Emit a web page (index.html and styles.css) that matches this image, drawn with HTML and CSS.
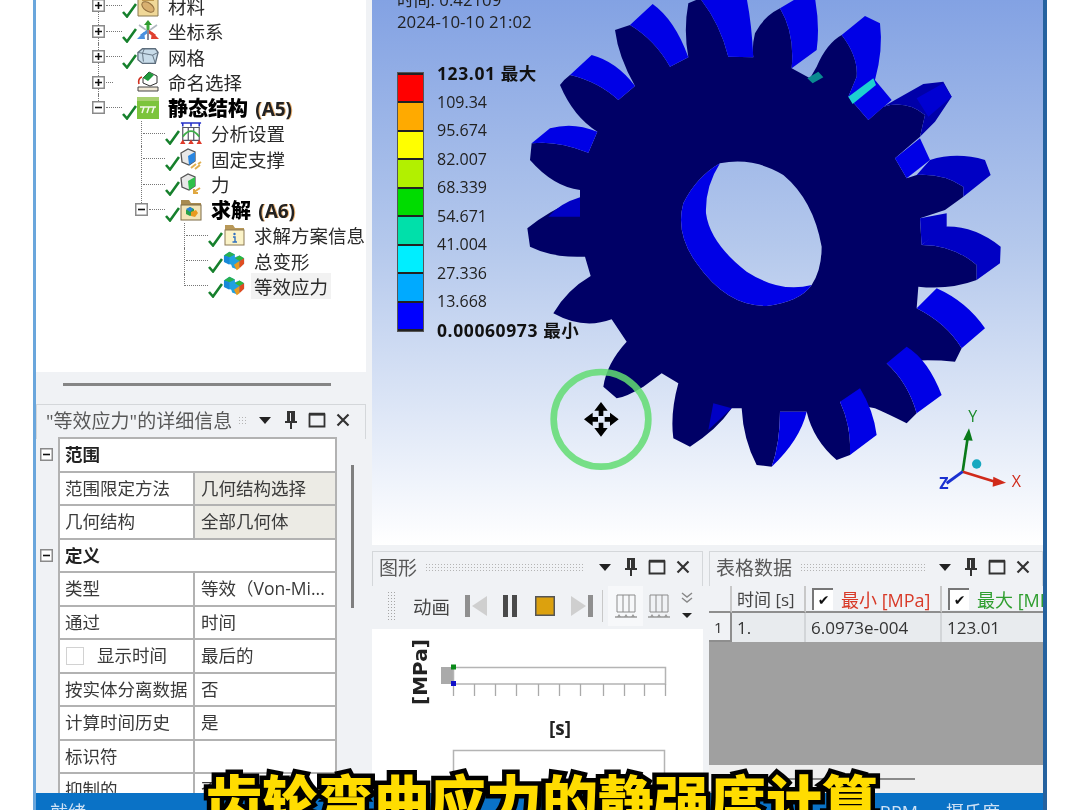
FILE: index.html
```html
<!DOCTYPE html>
<html lang="zh">
<head>
<meta charset="utf-8">
<title>静态结构 - 等效应力</title>
<link rel="stylesheet" href="styles.css">
</head>
<body>
<svg class="defs" aria-hidden="true">
  <symbol id="chk" viewBox="0 0 15 15"><path d="M1 9l4 4.5L14 1" fill="none" stroke="#16802c" stroke-width="2.6"/></symbol>
  <symbol id="plus" viewBox="0 0 13 13"><rect x=".75" y=".75" width="11.5" height="11.5" fill="#fff" stroke="#8a8a8a" stroke-width="1.5"/><path d="M3 6.5h7M6.5 3v7" stroke="#111" stroke-width="1.6"/></symbol>
  <symbol id="minus" viewBox="0 0 13 13"><rect x=".75" y=".75" width="11.5" height="11.5" fill="#fff" stroke="#8a8a8a" stroke-width="1.5"/><path d="M3 6.5h7" stroke="#111" stroke-width="1.6"/></symbol>
  <symbol id="mat" viewBox="0 0 22 22"><path d="M1 1h20v20H1z" fill="#f0d898" stroke="#8a7a50"/><path d="M5 0h12v6H5z" fill="#c09a50"/><ellipse cx="11" cy="12" rx="7" ry="4" transform="rotate(35 11 12)" fill="#d8b070" stroke="#927040"/></symbol>
  <symbol id="coord" viewBox="0 0 22 22"><path d="M11 11V3" stroke="#3aa83a" stroke-width="3"/><path d="M7 5l4-5 4 5z" fill="#2f9a2f"/><path d="M11 11l7 5" stroke="#e04030" stroke-width="3"/><path d="M15 12l7 7-8 0z" fill="#e04030"/><path d="M11 11l-7 5" stroke="#4a90e0" stroke-width="3"/><path d="M7 12l-7 7 8 0z" fill="#4a90e0"/><path d="M11 10v10" stroke="#889" stroke-width="2"/><path d="M2 5l7 5M20 5l-7 5" stroke="#b0b8c0" stroke-width="1.6"/></symbol>
  <symbol id="mesh" viewBox="0 0 24 22"><path d="M1 6l5-4h14l3 4-3 12H6L1 14z" fill="#c8dcea" stroke="#5d6d7c" stroke-width="1.4"/><path d="M1 6l16 3 6-3M17 9l3 9M8 2l-2 5M6 7l1 9" fill="none" stroke="#5d6d7c"/></symbol>
  <symbol id="named" viewBox="0 0 22 22"><path d="M6 7l6-6 8 4v7l-7 3-7-3z" fill="#fff" stroke="#333"/><path d="M6 7l6-6 5 3-6 6z" fill="#1f9a3c"/><path d="M1 16h20v4H1z" fill="#f3ead8" stroke="#444"/><path d="M2 13c-1-4 0-6 3-7" fill="none" stroke="#d03020" stroke-width="1.6"/></symbol>
  <symbol id="static" viewBox="0 0 22 22"><rect width="22" height="22" fill="#7cc43c"/><rect width="22" height="4" fill="#a8d070"/><path d="M3 10h16M7 10l-2 6M12 10l-2 6M17 10l-2 6" stroke="#f2f8e8" stroke-width="1.5" fill="none"/></symbol>
  <symbol id="analysis" viewBox="0 0 24 24"><path d="M3 6h18v14H3zM9 6v14M15 6v14" fill="none" stroke="#556" stroke-width="1.3"/><path d="M3 16Q12 4 21 16" fill="none" stroke="#3fae4a" stroke-width="2"/><path d="M1 1h22M3 1v4M12 1v4M21 1v4" stroke="#2630c8" stroke-width="1.7"/><path d="M0 24l3-5 3 5zM9 24l3-5 3 5zM18 24l3-5 3 5z" fill="#e03a2a"/></symbol>
  <symbol id="fixed" viewBox="0 0 22 22"><path d="M1 5l7-4 7 3v9l-6 4-7-3z" fill="#e8e8e8" stroke="#555" stroke-width="1.3"/><path d="M8 8l7-4v9l-6 4z" fill="#2a86e0"/><path d="M11 20l5-4M15 21l5-4M18 16l3-2" stroke="#e0b050" stroke-width="2"/></symbol>
  <symbol id="force" viewBox="0 0 22 22"><path d="M1 5l7-4 7 3v9l-6 4-7-3z" fill="#e8e8e8" stroke="#555" stroke-width="1.3"/><path d="M8 8l7-4v9l-6 4z" fill="#2fc04a"/><path d="M20 15l-6 4M14 16v4h4" fill="none" stroke="#e0a840" stroke-width="2"/></symbol>
  <symbol id="solve" viewBox="0 0 22 22"><path d="M1 1h8l2 3h10v17H1z" fill="#a88a50"/><rect x="1" y="6" width="20" height="15" fill="#f3e4b8" stroke="#7d6a44"/><path d="M6 11l4-3 4 2v5l-4 2-4-2z" fill="#28a048"/><path d="M6 10l4-2 3 2-3 3z" fill="#2a80d8"/><path d="M11 13l5-2 2 3-3 4-4-1z" fill="#e89a20"/></symbol>
  <symbol id="info" viewBox="0 0 22 22"><path d="M2 1h8l2 3h9v17H2z" fill="#b89858"/><rect x="2" y="6" width="19" height="15" fill="#fbf3c8" stroke="#8d7a54"/><circle cx="11.500" cy="10" r="1.200" fill="#3070c0"/><path d="M10 13h2v5M9.500 18h4.500" stroke="#3070c0" stroke-width="1.400" fill="none"/></symbol>
  <symbol id="result" viewBox="0 0 24 22"><path d="M1 5l6-4 6 3v3l5-2 5 3v6l-8 6-5-2-1-3-7-3z" fill="#20a0e0"/><path d="M1 5l6-4 6 3-6 3z" fill="#28b050"/><path d="M7 7v8l-6-3V5z" fill="#1888d8"/><path d="M13 8l5-3 5 3-5 3z" fill="#30b838"/><path d="M12 15l6-4v8l-3 2z" fill="#e89a20"/><path d="M18 11l5-3v6l-5 5z" fill="#e04c20"/></symbol>
  <symbol id="pin" viewBox="0 0 14 20"><path d="M3 1h8v10h2v2H8v6H6v-6H1v-2h2zM6 3v8h1V3z" fill="#333"/></symbol>
  <symbol id="box" viewBox="0 0 18 16"><path d="M1.500 2.500h15v12h-15z" fill="none" stroke="#333" stroke-width="1.800"/><path d="M1 2h16" stroke="#333" stroke-width="2.500"/></symbol>
  <symbol id="close" viewBox="0 0 14 14"><path d="M1.500 1.500l11 11M12.500 1.500l-11 11" stroke="#333" stroke-width="2.200"/></symbol>
  <symbol id="frame" viewBox="0 0 24 28"><path d="M3 3h18M3 20h18M3 3v17M9 3v17M15 3v17M21 3v17" stroke="#8c8c8c" fill="none"/><path d="M1 25h22" stroke="#9a9a9a" stroke-width="1.500"/><path d="M3 25l2-3 2 3zM10 25l2-3 2 3zM17 25l2-3 2 3z" fill="#9a9a9a"/></symbol>
</svg>

<div class="window">
  <div class="main">
    <aside class="left">
      <nav class="tree">
        <div class="row lv1"><span class="slot"><span class="toggle down"><svg class="t-ico"><use href="#plus"/></svg></span><i class="stub"></i></span><svg class="chk"><use href="#chk"/></svg><svg class="ico"><use href="#mat"/></svg><span class="label">材料</span></div>
        <div class="row lv1"><span class="slot"><span class="toggle up down"><svg class="t-ico"><use href="#plus"/></svg></span><i class="stub"></i></span><svg class="chk"><use href="#chk"/></svg><svg class="ico"><use href="#coord"/></svg><span class="label">坐标系</span></div>
        <div class="row lv1"><span class="slot"><span class="toggle up down"><svg class="t-ico"><use href="#plus"/></svg></span><i class="stub"></i></span><svg class="chk"><use href="#chk"/></svg><svg class="ico"><use href="#mesh"/></svg><span class="label">网格</span></div>
        <div class="row lv1"><span class="slot"><span class="toggle up down"><svg class="t-ico"><use href="#plus"/></svg></span><i class="stub short"></i></span><span class="chk"></span><svg class="ico"><use href="#named"/></svg><span class="label">命名选择</span></div>
        <div class="row lv1"><span class="slot"><span class="toggle up"><svg class="t-ico"><use href="#minus"/></svg></span><i class="stub"></i></span><svg class="chk"><use href="#chk"/></svg><svg class="ico"><use href="#static"/></svg><span class="label bold">静态结构 <b class="tag">(A5)</b></span></div>
        <div class="row lv2"><span class="slot"><span class="vline"><i class="stub"></i></span></span><svg class="chk"><use href="#chk"/></svg><svg class="ico"><use href="#analysis"/></svg><span class="label">分析设置</span></div>
        <div class="row lv2"><span class="slot"><span class="vline"><i class="stub"></i></span></span><svg class="chk"><use href="#chk"/></svg><svg class="ico"><use href="#fixed"/></svg><span class="label">固定支撑</span></div>
        <div class="row lv2"><span class="slot"><span class="vline"><i class="stub"></i></span></span><svg class="chk"><use href="#chk"/></svg><svg class="ico"><use href="#force"/></svg><span class="label">力</span></div>
        <div class="row lv2"><span class="slot"><span class="toggle up"><svg class="t-ico"><use href="#minus"/></svg></span><i class="stub"></i></span><svg class="chk"><use href="#chk"/></svg><svg class="ico"><use href="#solve"/></svg><span class="label bold">求解 <b class="tag">(A6)</b></span></div>
        <div class="row lv3"><span class="slot"><span class="vline"><i class="stub"></i></span></span><svg class="chk"><use href="#chk"/></svg><svg class="ico"><use href="#info"/></svg><span class="label">求解方案信息</span></div>
        <div class="row lv3"><span class="slot"><span class="vline"><i class="stub"></i></span></span><svg class="chk"><use href="#chk"/></svg><svg class="ico"><use href="#result"/></svg><span class="label">总变形</span></div>
        <div class="row lv3"><span class="slot"><span class="vline end"></span></span><svg class="chk"><use href="#chk"/></svg><svg class="ico"><use href="#result"/></svg><span class="label selected">等效应力</span></div>
      </nav>
      <div class="splitter"><span class="splitter-bar"></span></div>
      <section class="details">
        <header class="tab tab-details">
          <span class="tab-title">"等效应力"的详细信息</span>
          <span class="grip grip-short"></span>
          <span class="tab-btn"><i class="tri"></i></span>
          <span class="tab-btn"><svg class="pin"><use href="#pin"/></svg></span>
          <span class="tab-btn"><svg class="box"><use href="#box"/></svg></span>
          <span class="tab-btn"><svg class="close"><use href="#close"/></svg></span>
        </header>
        <div class="details-body">
          <table class="props">
            <colgroup><col class="col-exp"><col class="col-k"><col class="col-v"></colgroup>
            <tr><td class="exp"><svg class="t-ico"><use href="#minus"/></svg></td><th colspan="2">范围</th></tr>
            <tr><td class="exp"></td><td class="k">范围限定方法</td><td class="v ro">几何结构选择</td></tr>
            <tr><td class="exp"></td><td class="k">几何结构</td><td class="v ro">全部几何体</td></tr>
            <tr><td class="exp"><svg class="t-ico"><use href="#minus"/></svg></td><th colspan="2">定义</th></tr>
            <tr><td class="exp"></td><td class="k">类型</td><td class="v">等效（Von-Mi...</td></tr>
            <tr><td class="exp"></td><td class="k">通过</td><td class="v">时间</td></tr>
            <tr><td class="exp"></td><td class="k"><span class="cb"></span>显示时间</td><td class="v">最后的</td></tr>
            <tr><td class="exp"></td><td class="k">按实体分离数据</td><td class="v">否</td></tr>
            <tr><td class="exp"></td><td class="k">计算时间历史</td><td class="v">是</td></tr>
            <tr><td class="exp"></td><td class="k">标识符</td><td class="v"></td></tr>
            <tr><td class="exp"></td><td class="k">抑制的</td><td class="v">否</td></tr>
          </table>
          <span class="vscroll"></span>
        </div>
      </section>
    </aside>

    <div class="right">
      <section class="viewport">
        <svg class="scene" viewBox="0 0 670 545" aria-hidden="true">
          <g transform="translate(148 0) scale(.33333)">
            <path fill="#000066" fill-rule="evenodd" d="M120 255Q130 240 150 225Q235 245 295 300L345 258Q295 170 285 90L330 75Q405 120 450 200L505 172Q490 90 505 10L540 -5Q600 70 625 170L700 172Q695 140 705 100Q730 50 780 25Q825 100 815 205L870 235L890 200Q920 130 965 105Q1015 170 1010 230L985 290L1045 360L1090 320Q1160 300 1215 345L1200 410L1125 475L1160 535L1190 525Q1270 520 1330 560L1330 590L1275 630L1200 655L1205 735Q1300 735 1370 795L1370 840Q1290 870 1195 860L1190 925Q1280 970 1325 1045L1305 1085Q1200 1075 1100 1090Q1165 1150 1190 1240L1160 1270Q1100 1240 1065 1225L960 1205Q995 1280 990 1365L950 1380Q880 1320 860 1235L780 1235Q780 1330 755 1400L710 1395Q670 1320 665 1225L635 1225Q590 1290 510 1340L460 1315Q450 1240 475 1150L425 1120L370 1160Q320 1190 290 1195L250 1160Q260 1090 320 1025L275 958Q190 990 100 940Q140 870 212 828L195 770Q100 775 30 740L22 685Q90 630 180 595L180 570Q100 560 30 480L35 430Q110 420 205 458L232 395Q160 350 120 255Z M600 490Q530 530 490 610Q465 700 530 790Q620 920 740 918Q840 905 875 855Q905 810 905 740Q880 600 790 525Q700 470 600 490Z"/>
            <path fill="#0000e6" fill-rule="evenodd" d="M600 490Q530 530 490 610Q465 700 530 790Q620 920 740 918Q840 905 875 855Q905 810 905 740Q880 600 790 525Q700 470 600 490Z M600 490Q700 470 790 525Q880 600 905 740Q905 810 875 855Q780 880 680 815Q570 730 558 640Q555 560 600 490Z"/>
            <g fill="#0000e6">
              <path d="M150 225L215 165Q290 185 345 258L295 300Q235 245 150 225Z"/>
              <path d="M330 75L398 12Q465 60 505 172L450 200Q405 120 330 75Z"/>
              <path d="M540 -5L680 -5Q695 70 700 172L625 170Q600 70 540 -5Z"/>
              <path d="M780 25L830 -5L885 -5Q900 80 890 150L815 205Q825 100 780 25Z"/>
              <path d="M965 105L1035 48L1080 70Q1090 150 1065 240L1115 300L1045 360L985 290L1010 230Q1015 170 965 105Z"/>
              <path d="M1125 475L1200 415L1230 480L1160 535Z"/>
              <path d="M1190 925L1250 865Q1340 905 1395 985L1325 1045Q1280 970 1190 925Z"/>
              <path d="M1100 1090L1160 1040Q1225 1080 1265 1185L1190 1240Q1165 1150 1100 1090Z"/>
              <path d="M960 1205L1020 1165Q1060 1230 1070 1305L990 1365Q995 1280 960 1205Z"/>
              <path d="M780 1235L860 1235Q840 1320 755 1400Q780 1330 780 1235Z"/>
              <path d="M35 430L90 385Q160 365 232 395L205 458Q110 420 35 430Z"/>
            </g>
            <path fill="#0000a8" d="M1125 300L1210 252L1270 245L1295 290L1245 365L1200 410L1215 345Q1160 300 1090 320Z"/>
            <path fill="#0000d2" d="M1190 295L1270 250L1295 290L1225 350Z"/>
            <g fill="#0000c4">
              <path d="M1190 525L1230 480Q1310 455 1395 480L1412 525L1330 590Q1330 560 1330 560Q1270 520 1190 525Z"/>
              <path d="M1200 655L1280 640L1280 680L1205 735Z"/>
              <path d="M1205 735L1270 680Q1360 675 1442 740L1440 790L1370 840L1370 795Q1300 735 1205 735Z"/>
              <path d="M580 1210L635 1225L565 1290Z"/>
              <path d="M180 592Q120 610 85 650L180 650Z"/>
            </g>
            <path fill="#1dd0d0" d="M985 290L1060 235L1068 255L998 312Z"/>
            <path fill="#0a8a90" d="M862 235L895 215L910 232L878 250Z"/>
            <circle cx="243" cy="1258" r="142" fill="none" stroke="#62dc72" stroke-width="20" opacity=".85"/>
            <path fill="#000" d="M243 1206l20 26h-13v16h-14v-16h-13zM243 1310l20-26h-13v-16h-14v16h-13zM192 1258l26-20v13h16v14h-16v13zM296 1258l-26-20v13h-16v14h16v13z"/>
            <path d="M1328 1415L1345 1300" stroke="#0a7a1a" stroke-width="8"/>
            <path d="M1330 1320L1347 1285L1358 1322Z" fill="#0a7a1a"/>
            <path d="M1328 1415L1435 1448" stroke="#d02a1a" stroke-width="8"/>
            <path d="M1420 1430L1458 1448L1418 1460Z" fill="#d02a1a"/>
            <path d="M1328 1415L1280 1450" stroke="#1a30d0" stroke-width="9"/>
            <circle cx="1370" cy="1392" r="14" fill="#18a8c0"/>
            <text class="axis axis-y" x="1345" y="1265">Y</text>
            <text class="axis axis-x" x="1475" y="1460">X</text>
            <text class="axis axis-z" x="1258" y="1466">Z</text>
          </g>
        </svg>
        <div class="stamp">
          <span>时间: 0.42109</span>
          <span>2024-10-10 21:02</span>
        </div>
        <div class="legend">
          <div class="swatches">
            <i class="sw sw1"></i><i class="sw sw2"></i><i class="sw sw3"></i><i class="sw sw4"></i><i class="sw sw5"></i><i class="sw sw6"></i><i class="sw sw7"></i><i class="sw sw8"></i><i class="sw sw9"></i>
          </div>
          <div class="ticks">
            <b>123.01 最大</b><span>109.34</span><span>95.674</span><span>82.007</span><span>68.339</span><span>54.671</span><span>41.004</span><span>27.336</span><span>13.668</span><b>0.00060973 最小</b>
          </div>
        </div>
      </section>

      <div class="bottom">
        <section class="panel graph">
          <header class="tab">
            <span class="tab-title">图形</span>
            <span class="grip"></span>
            <span class="tab-btn"><i class="tri"></i></span>
            <span class="tab-btn"><svg class="pin"><use href="#pin"/></svg></span>
            <span class="tab-btn"><svg class="box"><use href="#box"/></svg></span>
            <span class="tab-btn"><svg class="close"><use href="#close"/></svg></span>
          </header>
          <div class="toolbar">
            <span class="tb-grip"></span>
            <span class="tb-label">动画</span>
            <svg class="tb-ico first" viewBox="0 0 22 22"><path d="M0 0h5v22H0z" fill="#8f8f8f"/><path d="M22 1v20L7 11z" fill="#cfcfcf"/></svg>
            <svg class="tb-ico pause" viewBox="0 0 14 22"><path d="M0 0h5v22H0zM9 0h5v22H9z" fill="#4a4a4a"/></svg>
            <svg class="tb-ico stop" viewBox="0 0 20 20"><rect x=".75" y=".75" width="18.5" height="18.500" fill="#dca10e" stroke="#555" stroke-width="1.500"/></svg>
            <svg class="tb-ico last" viewBox="0 0 22 22"><path d="M17 0h5v22h-5z" fill="#8f8f8f"/><path d="M0 1v20l15-10z" fill="#cfcfcf"/></svg>
            <span class="tb-sep"></span>
            <span class="tb-btn hi"><svg class="tb-frame"><use href="#frame"/></svg></span>
            <span class="tb-btn"><svg class="tb-frame"><use href="#frame"/></svg></span>
            <svg class="tb-more" viewBox="0 0 12 28"><path d="M1 1l5 4 5-4M1 6l5 4 5-4" fill="none" stroke="#888" stroke-width="1.400"/><path d="M1 21h10l-5 5z" fill="#222"/></svg>
          </div>
          <svg class="chart" viewBox="0 0 331 164" aria-hidden="true">
            <text class="chart-label mpa" transform="translate(55 76) rotate(-90)" x="0" y="0">[MPa]</text>
            <rect x="69" y="38" width="12" height="17" fill="#aaa"/>
            <path d="M81.500 38.500H293.500V55H81.500Z" fill="#fff" stroke="#b4b4b4" stroke-width="1.500"/>
            <path d="M81.500 55v12M102.500 55v12M123.500 55v12M144.500 55v12M166.500 55v12M187.500 55v12M208.500 55v12M231.500 55v12M252.500 55v12M272.500 55v12M293.500 55v12" stroke="#aaa" stroke-width="1.300"/>
            <rect x="79" y="35.500" width="5" height="5" fill="#0a8a1a"/>
            <rect x="79" y="52" width="5" height="5" fill="#1010c8"/>
            <text class="chart-label" x="177" y="106">[s]</text>
            <path d="M81.500 121.500H292.500V170H81.500Z" fill="#fff" stroke="#b4b4b4" stroke-width="1.500"/>
          </svg>
        </section>

        <section class="panel tabular">
          <header class="tab">
            <span class="tab-title">表格数据</span>
            <span class="grip"></span>
            <span class="tab-btn"><i class="tri"></i></span>
            <span class="tab-btn"><svg class="pin"><use href="#pin"/></svg></span>
            <span class="tab-btn"><svg class="box"><use href="#box"/></svg></span>
            <span class="tab-btn"><svg class="close"><use href="#close"/></svg></span>
          </header>
          <div class="grid-data">
            <div class="gh corner"></div>
            <div class="gh">时间 [s]</div>
            <div class="gh"><span class="gcheck">✔</span><span class="red">最小 [MPa]</span></div>
            <div class="gh"><span class="gcheck">✔</span><span class="green">最大 [MPa]</span></div>
            <div class="gr idx">1</div>
            <div class="gr">1.</div>
            <div class="gr">6.0973e-004</div>
            <div class="gr">123.01</div>
          </div>
          <div class="grey-fill"></div>
          <div class="hscroll"><span class="hscroll-bar"></span></div>
        </section>
      </div>
    </div>
  </div>

  <footer class="status">
    <span class="status-main">就绪</span>
    <span class="status-unit">RPM</span>
    <span class="status-unit">摄氏度</span>
  </footer>
  <div class="caption">齿轮弯曲应力的静强度计算</div>
</div>
</body>
</html>
```

FILE: styles.css
```css
* { box-sizing: border-box; }
html, body { margin: 0; height: 810px; overflow: hidden; background: #fff; }
body { font-family: "Open Sans", "Noto Sans CJK SC", sans-serif; color: #333; }
.defs { position: absolute; width: 0; height: 0; }

.window {
  position: relative;
  margin-left: 33px;
  width: 1014px;
  height: 810px;
  display: flex;
  flex-direction: column;
  overflow: hidden;
  background: #f0f2f5;
  border-left: 3px solid #6aa6dc;
  border-right: 4px solid #25629f;
  filter: blur(.45px);
}
.main { height: 793px; flex: none; display: flex; overflow: hidden; }

/* left column */
.left { width: 330px; flex: none; display: flex; flex-direction: column; background: #f0f2f5; }
.tree { height: 372px; flex: none; background: #fff; overflow: hidden; }
.tree .row:first-child { margin-top: -7px; }
.row { display: flex; align-items: center; height: 25.5px; font-size: 18.5px; color: #2a2a2a; white-space: nowrap; }
.lv1 { padding-left: 56px; }
.lv2 { padding-left: 99px; }
.lv3 { padding-left: 142px; }
.slot { width: 30px; height: 100%; flex: none; display: flex; align-items: center; }
.toggle { position: relative; width: 13px; height: 13px; flex: none; }
.t-ico { display: block; width: 13px; height: 13px; }
.toggle.up::before, .toggle.down::after {
  content: "";
  position: absolute;
  left: 6px;
  height: 7px;
  border-left: 1px dotted #777;
}
.toggle.up::before { top: -7px; }
.toggle.down::after { top: 13px; }
.stub { flex: 1; height: 0; border-top: 1px dotted #777; margin-left: 1px; }
.stub.short { margin-right: 9px; }
.vline { margin-left: 6px; width: 24px; height: 100%; border-left: 1px dotted #777; display: flex; align-items: center; }
.vline.end { height: 50%; align-self: flex-start; border-bottom: 1px dotted #777; }
.chk { width: 15px; height: 15px; flex: none; margin-top: 9px; }
.ico { width: 22px; height: 22px; flex: none; }
.label { margin-left: 9px; padding: 1px 3px 1px 0; }
.bold { font-size: 20px; font-weight: 900; color: #000; }
.tag { margin-left: 2px; font-size: 19px; color: #222; font-family: "Open Sans", sans-serif; font-weight: 700; text-shadow: 1px 0 0 #e8b070; }
.selected { background: #f2f2f2; margin-left: 6px; padding: 0 3px; }

.splitter { height: 32px; flex: none; padding: 11px 35px 0 27px; }
.splitter-bar { display: block; height: 3px; background: #858585; }

.tab {
  height: 35px;
  flex: none;
  display: flex;
  align-items: center;
  padding: 0 6px 4px 6px;
  border: 1px solid #d4d7da;
  border-bottom: 0;
  background: #f0f2f5;
}
.tab-title { font-size: 19px; color: #585858; white-space: nowrap; }
.grip {
  flex: 1;
  height: 9px;
  margin: 0 7px 0 8px;
  background-image: radial-gradient(#b4b4b4 .7px, transparent .8px);
  background-size: 3px 3px;
}
.grip-short { flex: 1; margin: 0 6px; }
.tab-btn { width: 26px; height: 20px; flex: none; display: flex; align-items: center; justify-content: center; }
.tri { width: 0; height: 0; border: 6px solid transparent; border-top: 7px solid #222; border-bottom: 0; }
.pin { width: 14px; height: 20px; }
.box { width: 18px; height: 16px; }
.close { width: 14px; height: 14px; }

.details { flex: 1; min-height: 0; display: flex; flex-direction: column; }
.tab-details { padding-left: 9px; padding-right: 9px; }
.details-body { flex: 1; min-height: 0; display: flex; align-items: flex-start; }
.props { width: 300px; flex: none; margin-top: -2px; border-collapse: collapse; table-layout: fixed; font-size: 17.5px; color: #3a3a3a; }
.col-exp { width: 23px; }
.col-k { width: 135px; }
.col-v { width: 142px; }
.props tr { height: 33.5px; }
.exp { padding: 0 0 0 4px; }
.props th, .k, .v { border: 2px solid #b2b2b2; background: #fff; padding: 0 0 2px 5px; text-align: left; white-space: nowrap; overflow: hidden; }
.props .v { padding-left: 6px; }
.props th { font-weight: 700; color: #222; border-left-width: 2px; }
.props .ro { background: #ecebe5; }
.cb { display: inline-block; width: 18px; height: 18px; margin: 0 13px 0 1px; vertical-align: -3px; border: 1.500px solid #d2d2d2; background: #fff; }
.vscroll { width: 3px; height: 143px; margin: 26px 0 0 14px; background: #7f7f7f; }

/* right column */
.right { width: 671px; margin-left: 6px; flex: none; display: flex; flex-direction: column; }
.viewport {
  position: relative;
  height: 545px;
  flex: none;
  overflow: hidden;
  background: linear-gradient(#83a2e3, #b4c8ec 45%, #ffffff 100%);
}
.scene { position: absolute; left: 0; top: 0; width: 670px; height: 545px; }
.axis { font-family: "Open Sans", sans-serif; font-size: 48px; }
.axis-y { fill: #1a8a2a; }
.axis-x { fill: #d02a1a; }
.axis-z { fill: #1a30d0; font-weight: 700; }

.stamp {
  position: absolute;
  left: 25px;
  top: -11px;
  display: flex;
  flex-direction: column;
  font-size: 16.800px;
  line-height: 22px;
  color: #222;
}
.legend { position: absolute; left: 25px; top: 59px; display: flex; }
.swatches {
  width: 27px;
  margin-top: 13px;
  display: flex;
  flex-direction: column;
  border: 1px solid #555;
  height: 260px;
}
.sw { flex: 1; border-bottom: 2px solid #222; }
.sw:first-child { border-top: 2px solid #222; }
.sw1 { background: #ff0000; }
.sw2 { background: #ffaa00; }
.sw3 { background: #ffff00; }
.sw4 { background: #b2f000; }
.sw5 { background: #00dc00; }
.sw6 { background: #00e0aa; }
.sw7 { background: #00eeff; }
.sw8 { background: #00aaff; }
.sw9 { background: #0000ff; }
.ticks { margin-left: 13px; display: flex; flex-direction: column; font-size: 16px; line-height: 28.5px; color: #222; white-space: nowrap; }
.ticks b { font-size: 17.500px; letter-spacing: .6px; font-weight: 700; color: #111; }

.bottom { flex: 1; min-height: 0; margin-top: 6px; display: flex; gap: 6px; }
.panel { min-width: 0; display: flex; flex-direction: column; overflow: hidden; }
.graph { width: 331px; flex: none; }
.tabular { flex: 1; }

.toolbar { height: 43px; flex: none; display: flex; align-items: center; padding: 0 0 4px 15px; background: #f0f2f5; }
.tb-grip {
  width: 9px;
  height: 30px;
  background-image: radial-gradient(#a6a6a6 .8px, transparent .9px);
  background-size: 3px 3px;
}
.tb-label { margin-left: 17px; font-size: 18.500px; color: #444; white-space: nowrap; }
.tb-ico { height: 22px; flex: none; }
.first { width: 22px; margin-left: 15px; }
.pause { width: 14px; margin-left: 16px; }
.stop { width: 20px; height: 20px; margin-left: 18px; }
.last { width: 22px; margin-left: 16px; }
.tb-sep { width: 1px; height: 32px; margin: 0 5px 0 9px; background: #c8c8c8; }
.tb-btn { width: 35px; height: 40px; flex: none; display: flex; align-items: center; justify-content: center; }
.hi { background: #f7f8fa; }
.tb-btn + .tb-btn { width: 32px; }
.tb-frame { width: 26px; height: 28px; }
.tb-more { width: 12px; height: 28px; margin-left: 6px; flex: none; }
.chart { display: block; width: 331px; height: 164px; flex: none; background: #fff; }
.chart-label { font-family: "Open Sans", sans-serif; font-size: 19px; font-weight: 700; fill: #222; }
.mpa { font-family: "DejaVu Sans", sans-serif; font-size: 20px; }

.grid-data { display: grid; grid-template-columns: 23px 74px 136px 136px; width: 100%; overflow: hidden; font-size: 17px; white-space: nowrap; }
.gh {
  height: 27px;
  display: flex;
  align-items: center;
  gap: 8px;
  padding-left: 5px;
  background: #f0f2f5;
  border-right: 2px solid #c8c8c8;
  border-bottom: 2px solid #8e8e8e;
  color: #444;
}
.corner { background: #f0f2f5; }
.gr {
  height: 29px;
  display: flex;
  align-items: center;
  padding-left: 5px;
  background: #e8ebee;
  border-right: 2px solid #d2d5d8;
  color: #333;
}
.idx { background: #f0f2f5; border-right: 2px solid #8e8e8e; border-bottom: 2px solid #8e8e8e; font-size: 15px; }
.gcheck {
  width: 21px;
  height: 22px;
  flex: none;
  display: flex;
  align-items: center;
  justify-content: center;
  margin-left: 1px;
  font-family: "DejaVu Sans", sans-serif;
  font-size: 14px;
  color: #111;
  background: #fff;
  border-left: 2px solid #777;
  border-top: 2px solid #777;
}
.red { color: #d83a28; font-size: 18px; }
.green { color: #2f9e2f; font-size: 18px; }
.grey-fill { flex: 1; min-height: 0; background: #a0a0a0; }
.hscroll { height: 28px; flex: none; background: #efefef; padding: 13px 0 0 11px; }
.hscroll-bar { display: block; width: 195px; height: 2px; background: #8a8a8a; }

.status {
  height: 17px;
  flex: none;
  display: flex;
  padding: 7px 0 0 14px;
  background: #0a72c6;
  color: #cfe2f5;
  font-size: 18px;
  line-height: 24px;
  overflow: hidden;
}
.status-main { margin-right: auto; }
.status-unit { margin-right: 28px; white-space: nowrap; }
.status-unit:last-child { margin-right: 43px; }

.caption {
  position: absolute;
  left: 170px;
  top: 758px;
  font-family: "Noto Sans CJK SC", sans-serif;
  font-size: 56px;
  font-weight: 900;
  line-height: 80px;
  white-space: nowrap;
  color: #ffdc00;
  -webkit-text-stroke: 9px #000;
  paint-order: stroke fill;
}
```
